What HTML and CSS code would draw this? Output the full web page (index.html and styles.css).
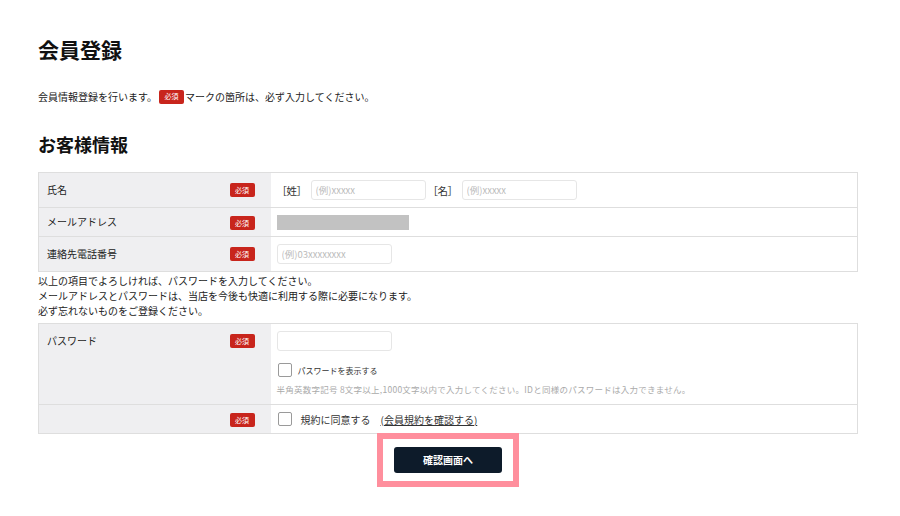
FILE: index.html
```html
<!DOCTYPE html>
<html lang="ja">
  <head>
    <meta charset="UTF-8">
    <meta name="viewport" content="width=device-width, initial-scale=1.0">
    <title>会員登録</title>
    <link rel="stylesheet" href="styles.css">
  </head>
  <body>
    <div class="container">
      <h1>会員登録</h1>
      <p class="lead">会員情報登録を行います。<span class="req">必須</span>マークの箇所は、必ず入力してください。</p>

      <h2>お客様情報</h2>

      <table class="form-table">
        <tr class="row-name">
          <th><span class="label">氏名</span><span class="req">必須</span></th>
          <td>
            <div class="name-fields">
              <span class="bracket">［姓］</span>
              <input type="text" class="field name" placeholder="(例)xxxxx">
              <span class="bracket">［名］</span>
              <input type="text" class="field name" placeholder="(例)xxxxx">
            </div>
          </td>
        </tr>
        <tr class="row-mail">
          <th><span class="label">メールアドレス</span><span class="req">必須</span></th>
          <td><div class="masked"></div></td>
        </tr>
        <tr class="row-tel">
          <th><span class="label">連絡先電話番号</span><span class="req">必須</span></th>
          <td><input type="text" class="field" placeholder="(例)03xxxxxxxx"></td>
        </tr>
      </table>

      <p class="note">
        以上の項目でよろしければ、パスワードを入力してください。<br>
        メールアドレスとパスワードは、当店を今後も快適に利用する際に必要になります。<br>
        必ず忘れないものをご登録ください。
      </p>

      <table class="form-table">
        <tr class="row-pass">
          <th><span class="label">パスワード</span><span class="req">必須</span></th>
          <td>
            <input type="password" class="field">
            <label class="check small">
              <span class="box"></span>パスワードを表示する
            </label>
            <p class="hint">半角英数字記号 8文字以上,1000文字以内で入力してください。IDと同様のパスワードは入力できません。</p>
          </td>
        </tr>
        <tr class="row-agree">
          <th><span class="label"></span><span class="req">必須</span></th>
          <td>
            <label class="check">
              <span class="box"></span>規約に同意する
              <a href="#" class="terms">(会員規約を確認する)</a>
            </label>
          </td>
        </tr>
      </table>

      <div class="actions">
        <div class="highlight">
          <button type="button" class="submit">確認画面へ</button>
        </div>
      </div>
    </div>
  </body>
</html>
```

FILE: styles.css
```css
* {
  margin: 0;
  padding: 0;
  box-sizing: border-box;
}

body {
  font-family: "Noto Sans CJK JP", "Noto Sans", sans-serif;
  background: #fff;
  color: #222;
}

.container {
  width: 820px;
  margin-left: 38px;
  padding-top: 34px;
}

h1 {
  font-size: 21px;
  line-height: 30px;
  font-weight: 700;
  color: #111;
}

.lead {
  margin-top: 25px;
  font-size: 10px;
  line-height: 15px;
  display: flex;
  align-items: center;
}

.lead .req {
  margin: 0 1px 0 2px;
}

h2 {
  margin-top: 28px;
  font-size: 18px;
  line-height: 24px;
  font-weight: 700;
  color: #111;
}

.req {
  display: inline-flex;
  align-items: center;
  justify-content: center;
  width: 25px;
  height: 14px;
  background: #c8251c;
  color: #fff;
  font-size: 7px;
  border-radius: 2px;
  font-weight: 400;
}

.form-table {
  width: 100%;
  border-collapse: collapse;
  border: 1px solid #dedede;
}

h2 + .form-table {
  margin-top: 16px;
}

.form-table tr {
  border-top: 1px solid #dedede;
}

.form-table th {
  width: 232px;
  background: #efeff1;
  font-weight: 400;
  font-size: 10px;
  text-align: left;
  vertical-align: top;
  padding: 0 16px 0 8px;
}

.form-table td {
  padding: 0 6px;
  vertical-align: middle;
  font-size: 10px;
}

.row-name th,
.row-tel th {
  height: 35px;
}

.row-mail th {
  height: 29px;
}

.form-table th .label {
  float: left;
  line-height: 34px;
}

.form-table th .req {
  float: right;
  margin-top: 10px;
}

.row-mail th .label {
  line-height: 28px;
}

.row-mail th .req {
  margin-top: 8px;
}

.name-fields {
  display: flex;
  align-items: center;
}

.bracket {
  font-size: 10.5px;
  color: #333;
  width: 34px;
  letter-spacing: -0.5px;
}

.name-fields .field + .bracket {
  margin-left: 2px;
}

.field {
  width: 115px;
  height: 20px;
  border: 1px solid #e6e6e6;
  border-radius: 3px;
  padding: 0 4px;
  font-family: inherit;
  font-size: 9.5px;
  background: #fff;
  color: #333;
  display: block;
}

.field::placeholder {
  color: #bbb;
}

.masked {
  width: 132px;
  height: 15px;
  background: #c2c2c2;
}

.note {
  font-size: 10px;
  line-height: 15px;
  padding-top: 1px;
  margin-bottom: 5px;
  color: #222;
}

.row-pass th {
  height: 81px;
}

.row-pass td {
  vertical-align: top;
  padding-top: 7px;
}

.row-agree th {
  height: 29px;
}

.row-agree th .req {
  margin-top: 8px;
}

.check {
  display: flex;
  align-items: center;
  font-size: 10px;
  color: #333;
}

.check .box {
  width: 14px;
  height: 14px;
  border: 1px solid #9a9a9a;
  border-radius: 2px;
  background: #fff;
  margin: 0 9px 0 1px;
}

.check.small {
  margin-top: 12px;
  font-size: 8px;
}

.check.small .box {
  margin-right: 6px;
}

.hint {
  margin-top: 6px;
  font-size: 8.5px;
  letter-spacing: 0.25px;
  color: #aaa;
  line-height: 12px;
}

.terms {
  margin-left: 10px;
  color: #333;
  text-decoration: underline;
}

.actions {
  display: flex;
  justify-content: center;
  margin-top: -1px;
}

.highlight {
  border: 6px solid #ff8f9d;
  padding: 6px 11px 8px;
  background: #fff;
}

.submit {
  width: 108px;
  height: 26px;
  border: none;
  border-radius: 3px;
  background: #0d1b2a;
  color: #fff;
  font-family: inherit;
  font-size: 10px;
  font-weight: 700;
  cursor: pointer;
}
```
